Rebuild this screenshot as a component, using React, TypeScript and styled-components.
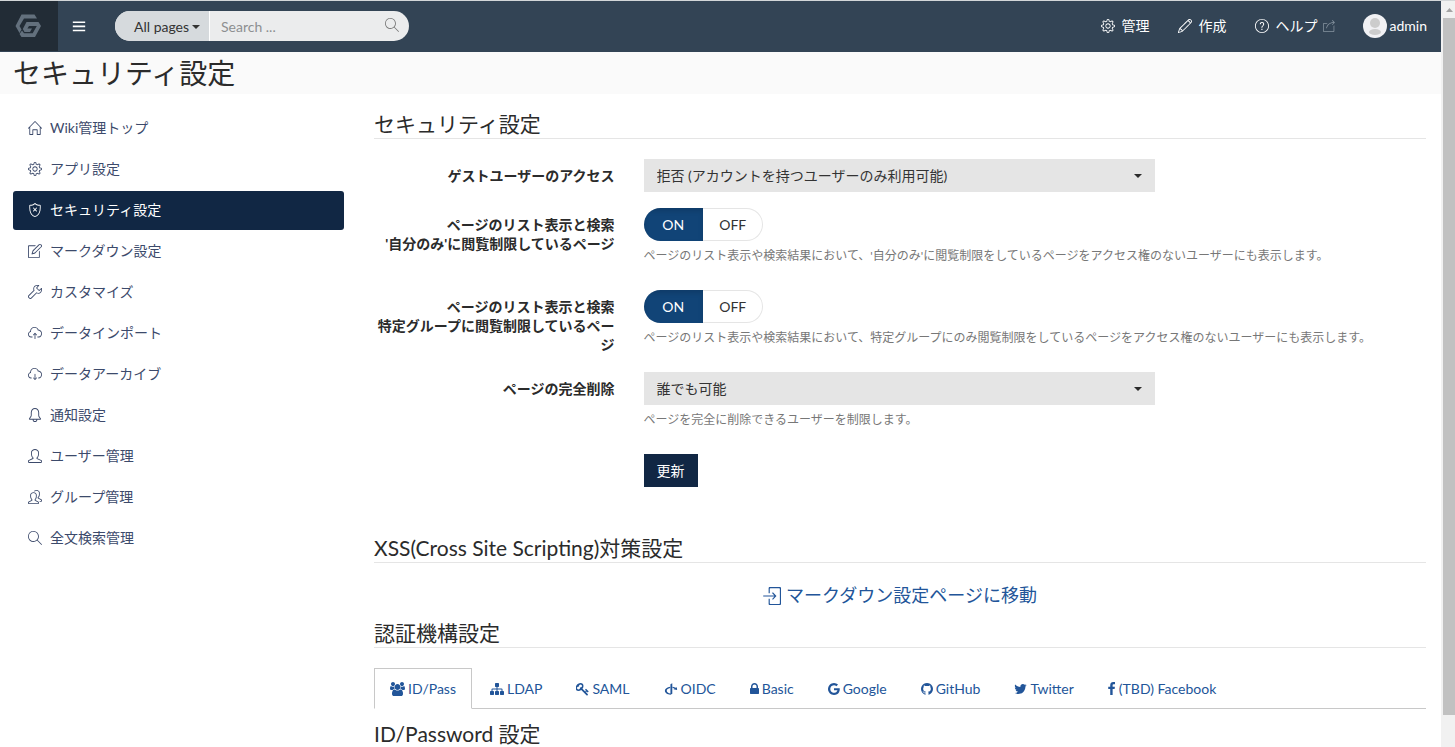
import React from 'react';
import styled, { createGlobalStyle, css } from 'styled-components';
import {
  SlHome, SlSettings, SlShield, SlNote, SlWrench, SlCloudUpload, SlCloudDownload,
  SlBell, SlUser, SlPeople, SlMagnifier, SlPencil, SlQuestion, SlShareAlt, SlLogin,
} from 'react-icons/sl';
import { TfiMenu } from 'react-icons/tfi';
import { FaOpenid } from 'react-icons/fa';

const GlobalStyle = createGlobalStyle`
  *, *::before, *::after { box-sizing: border-box; }
  body {
    margin: 0;
    background: #fff;
    color: #2b2b2b;
    font-family: Lato, "Noto Sans CJK JP", sans-serif;
    font-size: 14px;
    line-height: 20px;
  }
  button, input, select { font: inherit; color: inherit; }
  a { color: inherit; text-decoration: none; }
  svg { flex: none; display: block; }
`;

const Shell = styled.div`
  display: flex;
  height: 100vh;
  overflow: hidden;
  border-top: 1px solid #d3d6d8;
`;

const Page = styled.div`
  flex: 1;
  min-width: 0;
  overflow: hidden;
`;

const ScrollTrack = styled.div`
  display: flex;
  flex-direction: column;
  flex: 0 0 14px;
  padding-left: 2px;
  background: #f1f1f1;
`;

const ScrollArrow = styled.div`
  display: flex;
  align-items: center;
  justify-content: center;
  height: 17px;
  color: #a3a3a3;
`;

const ScrollThumb = styled.div`
  flex: 1;
  margin-bottom: 32px;
  background: #c1c1c1;
`;

const Navbar = styled.header`
  display: flex;
  align-items: center;
  height: 51px;
  padding: 0 14px 1px 0;
  background: #334455;
  color: #fff;
`;

const Brand = styled.a`
  display: flex;
  align-items: center;
  justify-content: center;
  width: 58px;
  height: 50px;
  background: #222c36;
`;

const MenuButton = styled.button`
  display: flex;
  margin: 0 29px 0 14px;
  padding: 0;
  border: 0;
  background: none;
  color: #fff;
  stroke: #fff;
`;

const SearchForm = styled.form`
  display: flex;
  width: 294px;
  height: 30px;
  border-radius: 15px;
  overflow: hidden;
  background: #ebeced;
`;

const ScopeButton = styled.button`
  display: flex;
  align-items: center;
  gap: 3px;
  flex: 0 0 95px;
  padding: 2px 0 0 19px;
  border: 0;
  border-right: 1px solid #fff;
  background: #d6dadd;
  color: #333;
`;

const SearchInput = styled.input`
  flex: 1;
  min-width: 0;
  padding: 2px 11px 0;
  border: 0;
  outline: 0;
  background: none;
  &::placeholder { color: #8d8f91; opacity: 1; }
`;

const SearchButton = styled.button`
  display: flex;
  align-items: center;
  padding: 0 10px 2px 0;
  border: 0;
  background: none;
  color: #777;
`;

const NavLinks = styled.nav`
  display: flex;
  align-items: center;
  gap: 28px;
  margin-left: auto;
`;

const NavLink = styled.a`
  display: flex;
  align-items: center;
  gap: 7px;
`;

const ExternalMark = styled.span`
  margin-left: -2px;
  color: #8794a0;
`;

const UserLink = styled.a`
  display: flex;
  align-items: center;
  gap: 3px;
`;

const TitleBar = styled.div`
  height: 42px;
  padding: 0 13px;
  background: #fafafa;
`;

const PageTitle = styled.h1`
  margin: 0;
  font-size: 28px;
  font-weight: 400;
  line-height: 42px;
`;

const Columns = styled.div`
  display: grid;
  grid-template-columns: minmax(0, 331fr) minmax(0, 1052fr);
  gap: 30px;
  padding: 15px 15px 0 13px;
`;

const SideNav = styled.nav`
  display: flex;
  flex-direction: column;
  gap: 2px;
`;

const SideLink = styled.a<{ $active?: boolean }>`
  display: flex;
  align-items: center;
  gap: 8px;
  height: 39px;
  padding: 0 15px 2px;
  border-radius: 3px;
  color: #3c4a6b;
  ${p => p.$active && css`
    background: #112744;
    color: #fff;
  `}
`;

const Main = styled.main`
  min-width: 0;
  padding-top: 4px;
`;

const SectionTitle = styled.h2`
  margin: 0 0 20px;
  padding-bottom: 4px;
  border-bottom: 1px solid #e5e5e5;
  font-size: 21px;
  font-weight: 400;
  line-height: 21px;
`;

const TabTitle = styled.h3`
  margin: 12px 0 0;
  font-size: 21px;
  font-weight: 400;
  line-height: 25px;
`;

const SettingsForm = styled.form`
  margin-bottom: 50px;
`;

const FormRow = styled.div`
  display: flex;
  margin: 0 -15px 16px;
`;

const FieldLabel = styled.label`
  flex: 0 0 25%;
  padding: 7px 15px 0;
  font-weight: 700;
  line-height: 19px;
  text-align: right;
`;

const Field = styled.div`
  flex: 1;
  min-width: 0;
  padding: 0 15px 0 14px;
`;

const SelectBox = styled.div`
  position: relative;
  width: 511px;
  max-width: 100%;
`;

const Select = styled.select`
  display: block;
  width: 100%;
  height: 33px;
  padding: 0 30px 0 13px;
  border: 0;
  border-radius: 0;
  background: #e5e5e5;
  color: #333;
  appearance: none;
`;

const SelectCaret = styled.span`
  position: absolute;
  top: 15px;
  right: 13px;
  pointer-events: none;
`;

const Help = styled.p`
  margin: 6px 0 9px;
  color: #777;
  font-size: 12px;
  line-height: 18px;
`;

const Toggle = styled.div`
  display: flex;
  width: 119px;
  height: 33px;
  border-radius: 17px;
  overflow: hidden;
  box-shadow: inset 0 0 0 1px #e5e5e5;
`;

const ToggleOption = styled.label`
  display: flex;
  align-items: center;
  justify-content: center;
  flex: 1;
  color: #333;
  &:has(input:checked) {
    background: #114477;
    color: #fff;
    box-shadow: inset 0 3px 5px rgba(0, 0, 0, 0.13);
  }
`;

const HiddenRadio = styled.input`
  appearance: none;
  width: 0;
  height: 0;
  margin: 0;
`;

const SubmitButton = styled.button`
  height: 33px;
  padding: 0 13px;
  border: 0;
  background: #112744;
  color: #fff;
`;

const JumpLink = styled.a`
  display: flex;
  align-items: center;
  justify-content: center;
  gap: 5px;
  margin-bottom: 14px;
  color: #225599;
  font-size: 18px;
  line-height: 25px;
`;

const Tabs = styled.ul`
  display: flex;
  gap: 2px;
  margin: 0;
  padding: 0;
  list-style: none;
  border-bottom: 1px solid #c8c8c8;
`;

const Tab = styled.a<{ $active?: boolean }>`
  display: flex;
  align-items: center;
  gap: 3px;
  height: 41px;
  margin-bottom: -1px;
  padding: 0 15px;
  border: 1px solid transparent;
  color: #225599;
  ${p => p.$active && css`
    border-color: #c8c8c8 #c8c8c8 #fff;
    background: #fff;
  `}
`;

const Caret = ({ size = 8 }: { size?: number }) => (
  <svg width={size} height={size / 2} viewBox="0 0 8 4"><path d="M0 0h8L4 4z" fill="currentColor" /></svg>
);

const Logo = () => (
  <svg width="28" height="24" viewBox="0 0 28 24" fill="#63707d">
    <path d="M6.5 0.5H19.5L22 4.5H9L4.5 12L6.5 15.5L4.5 19L0.5 12Z" />
    <path d="M11.5 8H23.5L26 12L20 23H6.5L4.5 20L7 16.5L9 19.2H17.7L21.8 12H14L12.4 14.5H17L15 18H9.5L7.8 15Z" />
  </svg>
);

const Avatar = () => (
  <svg width="24" height="24" viewBox="0 0 24 24">
    <circle cx="12" cy="12" r="12" fill="#f1f1f4" />
    <circle cx="12" cy="9" r="5" fill="#ccc" />
    <ellipse cx="12" cy="18" rx="6" ry="3" fill="#ccc" />
  </svg>
);

const glyphs = {
  users: 'M593 896q-162 5-265 128h-134q-82 0-138-40.5t-56-118.5q0-353 124-353 6 0 43.5 21t97.5 42.5 119 21.5q67 0 133-23-5 37-5 66 0 139 81 256zm1071 637q0 120-73 189.5t-194 69.5h-874q-121 0-194-69.5t-73-189.5q0-53 3.5-103.5t14-109 26.5-108.5 43-97.5 62-81 85.5-53.5 111.5-20q10 0 43 21.5t73 48 107 48 135 21.5 135-21.5 107-48 73-48 43-21.5q61 0 111.5 20t85.5 53.5 62 81 43 97.5 26.5 108.5 14 109 3.5 103.5zm-1024-1277q0 106-75 181t-181 75-181-75-75-181 75-181 181-75 181 75 75 181zm704 384q0 159-112.5 271.5t-271.5 112.5-271.5-112.5-112.5-271.5 112.5-271.5 271.5-112.5 271.5 112.5 112.5 271.5zm576 225q0 78-56 118.5t-138 40.5h-134q-103-123-265-128 81-117 81-256 0-29-5-66 66 23 133 23 59 0 119-21.5t97.5-42.5 43.5-21q124 0 124 353zm-128-609q0 106-75 181t-181 75-181-75-75-181 75-181 181-75 181 75 75 181z',
  sitemap: 'M1792 1248v320q0 40-28 68t-68 28h-320q-40 0-68-28t-28-68v-320q0-40 28-68t68-28h96v-192h-512v192h96q40 0 68 28t28 68v320q0 40-28 68t-68 28h-320q-40 0-68-28t-28-68v-320q0-40 28-68t68-28h96v-192h-512v192h96q40 0 68 28t28 68v320q0 40-28 68t-68 28h-320q-40 0-68-28t-28-68v-320q0-40 28-68t68-28h96v-192q0-52 38-90t90-38h512v-192h-96q-40 0-68-28t-28-68v-320q0-40 28-68t68-28h320q40 0 68 28t28 68v320q0 40-28 68t-68 28h-96v192h512q52 0 90 38t38 90v192h96q40 0 68 28t28 68z',
  key: 'M832 512q0-80-56-136t-136-56-136 56-56 136q0 42 19 83-41-19-83-19-80 0-136 56t-56 136 56 136 136 56 136-56 56-136q0-42-19-83 41 19 83 19 80 0 136-56t56-136zm851 704q0 17-49 66t-66 49q-9 0-28.5-16t-36.5-33-38.5-40-24.5-26l-96 96 220 220q28 28 28 68 0 42-39 81t-81 39q-40 0-68-28l-671-671q-176 131-365 131-163 0-265.5-102.5t-102.5-265.5q0-160 95-313t248-248 313-95q163 0 265.5 102.5t102.5 265.5q0 189-131 365l355 355 96-96q-3-3-26-24.5t-40-38.5-33-36.5-16-28.5q0-17 49-66t66-49q13 0 23 10 6 6 46 44.5t82 79.5 86.5 86 73 78 28.5 41z',
  lock: 'M640 768h512v-192q0-106-75-181t-181-75-181 75-75 181v192zm832 96v576q0 40-28 68t-68 28h-960q-40 0-68-28t-28-68v-576q0-40 28-68t68-28h32v-192q0-184 132-316t316-132 316 132 132 316v192h32q40 0 68 28t28 68z',
  google: 'M896 786h725q12 67 12 128 0 217-91 387.5t-259.5 266.5-386.5 96q-157 0-299-60.5t-245-163.5-163.5-245-60.5-299 60.5-299 163.5-245 245-163.5 299-60.5q300 0 515 201l-209 201q-123-119-306-119-129 0-238.5 65t-173.5 176.5-64 243.5 64 243.5 173.5 176.5 238.5 65q87 0 160-24t120-60 82-82 51.5-87 22.5-78h-436v-264z',
  github: 'M896 128q209 0 385.5 103t279.5 279.5 103 385.5q0 251-146.5 451.5t-378.5 277.5q-27 5-40-7t-13-30q0-3 .5-76.5t.5-134.5q0-97-52-142 57-6 102.5-18t94-39 81-66.5 53-105 20.5-150.5q0-119-79-206 37-91-8-204-28-9-81 11t-92 44l-38 24q-93-26-192-26t-192 26q-16-11-42.5-27t-83.5-38.5-85-13.5q-45 113-8 204-79 87-79 206 0 85 20.5 150t52.5 105 80.5 67 94 39 102.5 18q-39 36-49 103-21 10-45 15t-57 5-65.5-21.5-55.5-62.5q-19-32-48.5-52t-49.5-24l-20-3q-21 0-29 4.5t-5 11.5 9 14 13 12l7 5q22 10 43.5 38t31.5 51l10 23q13 38 44 61.5t67 30 69.5 7 55.5-3.5l23-4q0 38 .5 88.5t.5 54.5q0 18-13 30t-40 7q-232-77-378.5-277.5t-146.5-451.5q0-209 103-385.5t279.5-279.5 385.5-103z',
  twitter: 'M1684 408q-67 98-162 167 1 14 1 42 0 130-38 259.5t-115.5 248.5-184.5 210.5-258 146-323 54.5q-271 0-496-145 35 4 78 4 225 0 401-138-105-2-188-64.5t-114-159.5q33 5 61 5 43 0 85-11-112-23-185.5-111.5t-73.5-205.5v-4q68 38 146 41-66-44-105-115t-39-154q0-88 44-163 121 149 294.5 238.5t371.5 99.5q-8-38-8-74 0-134 94.5-228.5t228.5-94.5q140 0 236 102 109-21 205-78-37 115-142 178 93-10 186-50z',
  facebook: 'M1343 12v264h-157q-86 0-116 36t-30 108v189h293l-39 296h-254v759h-306v-759h-255v-296h255v-218q0-186 104-288.5t277-102.5q147 0 228 12z',
};

const Glyph = ({ name, x = 0, units = 1792 }: { name: keyof typeof glyphs; x?: number; units?: number }) => (
  <svg width={Math.round(units / 128)} height="14" viewBox={`${x} 0 ${units} 1792`} fill="currentColor">
    <path d={glyphs[name]} />
  </svg>
);

const menu = [
  { icon: <SlHome />, text: 'Wiki管理トップ' },
  { icon: <SlSettings />, text: 'アプリ設定' },
  { icon: <SlShield />, text: 'セキュリティ設定', active: true },
  { icon: <SlNote />, text: 'マークダウン設定' },
  { icon: <SlWrench />, text: 'カスタマイズ' },
  { icon: <SlCloudUpload />, text: 'データインポート' },
  { icon: <SlCloudDownload />, text: 'データアーカイブ' },
  { icon: <SlBell />, text: '通知設定' },
  { icon: <SlUser />, text: 'ユーザー管理' },
  { icon: <SlPeople />, text: 'グループ管理' },
  { icon: <SlMagnifier />, text: '全文検索管理' },
];

const tabs = [
  { icon: <Glyph name="users" units={1920} />, text: 'ID/Pass', active: true },
  { icon: <Glyph name="sitemap" />, text: 'LDAP' },
  { icon: <Glyph name="key" x={64} units={1664} />, text: 'SAML' },
  { icon: <FaOpenid />, text: 'OIDC' },
  { icon: <Glyph name="lock" x={320} units={1152} />, text: 'Basic' },
  { icon: <Glyph name="google" x={128} units={1536} />, text: 'Google' },
  { icon: <Glyph name="github" x={128} units={1536} />, text: 'GitHub' },
  { icon: <Glyph name="twitter" x={64} units={1664} />, text: 'Twitter' },
  { icon: <Glyph name="facebook" x={448} units={1024} />, text: '(TBD) Facebook' },
];

const OnOff = ({ name, labelId }: { name: string; labelId: string }) => (
  <Toggle role="radiogroup" aria-labelledby={labelId}>
    <ToggleOption><HiddenRadio type="radio" name={name} defaultChecked />ON</ToggleOption>
    <ToggleOption><HiddenRadio type="radio" name={name} />OFF</ToggleOption>
  </Toggle>
);

export default function App() {
  return (
    <Shell>
      <GlobalStyle />
      <Page>
        <Navbar>
          <Brand href="#" aria-label="GROWI"><Logo /></Brand>
          <MenuButton type="button" aria-label="Menu"><TfiMenu /></MenuButton>
          <SearchForm role="search">
            <ScopeButton type="button">All pages<Caret /></ScopeButton>
            <SearchInput type="text" placeholder="Search ..." aria-label="Search" />
            <SearchButton type="button" aria-label="Submit search"><SlMagnifier /></SearchButton>
          </SearchForm>
          <NavLinks>
            <NavLink href="#"><SlSettings />管理</NavLink>
            <NavLink href="#"><SlPencil />作成</NavLink>
            <NavLink href="#"><SlQuestion />ヘルプ<ExternalMark><SlShareAlt size={12} /></ExternalMark></NavLink>
            <UserLink href="#"><Avatar />admin</UserLink>
          </NavLinks>
        </Navbar>
        <TitleBar><PageTitle>セキュリティ設定</PageTitle></TitleBar>
        <Columns>
          <SideNav>
            {menu.map(m => (
              <SideLink key={m.text} href="#" $active={m.active}>{m.icon}{m.text}</SideLink>
            ))}
          </SideNav>
          <Main>
            <SectionTitle>セキュリティ設定</SectionTitle>
            <SettingsForm>
              <FormRow>
                <FieldLabel htmlFor="guest">ゲストユーザーのアクセス</FieldLabel>
                <Field>
                  <SelectBox>
                    <Select id="guest"><option>拒否 (アカウントを持つユーザーのみ利用可能)</option></Select>
                    <SelectCaret><Caret /></SelectCaret>
                  </SelectBox>
                </Field>
              </FormRow>
              <FormRow>
                <FieldLabel as="div" id="owner-label">ページのリスト表示と検索<br />'自分のみ'に閲覧制限しているページ</FieldLabel>
                <Field>
                  <OnOff name="owner" labelId="owner-label" />
                  <Help>ページのリスト表示や検索結果において、'自分のみ'に閲覧制限をしているページをアクセス権のないユーザーにも表示します。</Help>
                </Field>
              </FormRow>
              <FormRow>
                <FieldLabel as="div" id="group-label">ページのリスト表示と検索<br />特定グループに閲覧制限しているページ</FieldLabel>
                <Field>
                  <OnOff name="group" labelId="group-label" />
                  <Help>ページのリスト表示や検索結果において、特定グループにのみ閲覧制限をしているページをアクセス権のないユーザーにも表示します。</Help>
                </Field>
              </FormRow>
              <FormRow>
                <FieldLabel htmlFor="deletion">ページの完全削除</FieldLabel>
                <Field>
                  <SelectBox>
                    <Select id="deletion"><option>誰でも可能</option></Select>
                    <SelectCaret><Caret /></SelectCaret>
                  </SelectBox>
                  <Help>ページを完全に削除できるユーザーを制限します。</Help>
                </Field>
              </FormRow>
              <FormRow>
                <FieldLabel as="div" />
                <Field><SubmitButton type="button">更新</SubmitButton></Field>
              </FormRow>
            </SettingsForm>
            <SectionTitle>XSS(Cross Site Scripting)対策設定</SectionTitle>
            <JumpLink href="#"><SlLogin />マークダウン設定ページに移動</JumpLink>
            <SectionTitle>認証機構設定</SectionTitle>
            <Tabs>
              {tabs.map(t => (
                <li key={t.text}><Tab href="#" $active={t.active}>{t.icon}{t.text}</Tab></li>
              ))}
            </Tabs>
            <TabTitle>ID/Password 設定</TabTitle>
          </Main>
        </Columns>
      </Page>
      <ScrollTrack aria-hidden="true">
        <ScrollArrow><svg width="7" height="4" viewBox="0 0 7 4"><path d="M0 4h7L3.5 0z" fill="currentColor" /></svg></ScrollArrow>
        <ScrollThumb />
      </ScrollTrack>
    </Shell>
  );
}
